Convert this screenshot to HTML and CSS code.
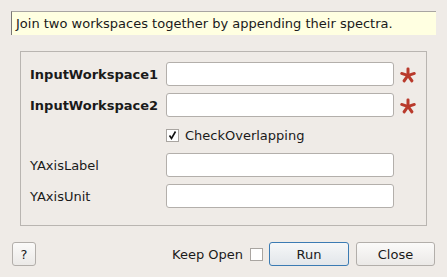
FILE: index.html
```html
<!DOCTYPE html>
<html lang="en">
<head>
    <meta charset="UTF-8">
    <title>AppendSpectra</title>
    <link rel="stylesheet" href="styles.css">
</head>
<body>
    <div class="dialog">
        <div class="description">Join two workspaces together by appending their spectra.</div>

        <div class="props">
            <label class="prop-label required" for="ws1">InputWorkspace1</label>
            <input type="text" id="ws1" class="prop-input">
            <span class="star"><svg width="16" height="16" viewBox="0 0 16 16"><g fill="#b93a2c"><rect x="6.5" y="0.5" width="3" height="8" rx="1.2"/><rect x="6.5" y="0.5" width="3" height="8" rx="1.2" transform="rotate(72 8 8.5)"/><rect x="6.5" y="0.5" width="3" height="8" rx="1.2" transform="rotate(144 8 8.5)"/><rect x="6.5" y="0.5" width="3" height="8" rx="1.2" transform="rotate(216 8 8.5)"/><rect x="6.5" y="0.5" width="3" height="8" rx="1.2" transform="rotate(288 8 8.5)"/></g></svg></span>

            <label class="prop-label required" for="ws2">InputWorkspace2</label>
            <input type="text" id="ws2" class="prop-input">
            <span class="star"><svg width="16" height="16" viewBox="0 0 16 16"><g fill="#b93a2c"><rect x="6.5" y="0.5" width="3" height="8" rx="1.2"/><rect x="6.5" y="0.5" width="3" height="8" rx="1.2" transform="rotate(72 8 8.5)"/><rect x="6.5" y="0.5" width="3" height="8" rx="1.2" transform="rotate(144 8 8.5)"/><rect x="6.5" y="0.5" width="3" height="8" rx="1.2" transform="rotate(216 8 8.5)"/><rect x="6.5" y="0.5" width="3" height="8" rx="1.2" transform="rotate(288 8 8.5)"/></g></svg></span>

            <span></span>
            <label class="check-row">
                <span class="checkbox checked"><svg width="11" height="11" viewBox="0 0 11 11"><path d="M2.5 5.5 L4.5 8.5 L8.5 1.5" fill="none" stroke="#111" stroke-width="1.6"/></svg></span>
                CheckOverlapping
            </label>
            <span></span>

            <label class="prop-label" for="ylabel">YAxisLabel</label>
            <input type="text" id="ylabel" class="prop-input">
            <span></span>

            <label class="prop-label" for="yunit">YAxisUnit</label>
            <input type="text" id="yunit" class="prop-input">
            <span></span>
        </div>

        <div class="button-bar">
            <button class="btn help-btn">?</button>
            <div class="right-buttons">
                <span class="keep-open">Keep Open</span>
                <span class="checkbox"></span>
                <button class="btn run-btn">Run</button>
                <button class="btn close-btn">Close</button>
            </div>
        </div>
    </div>
</body>
</html>
```

FILE: styles.css
```css
:root {
    --window-bg: #efebe7;
    --frame-color: #b9b5b1;
    --input-border: #b3afab;
    --text-color: #1a1a1a;
}

* {
    box-sizing: border-box;
}

body {
    margin: 0;
    background-color: var(--window-bg);
    font-family: 'DejaVu Sans', 'Liberation Sans', sans-serif;
    font-size: 13px;
    color: var(--text-color);
}

.dialog {
    width: 447px;
    height: 277px;
    display: flex;
    flex-direction: column;
}

.description {
    margin: 11px 11px 0 11px;
    height: 24px;
    padding: 0 4px;
    line-height: 23px;
    background: #ffffe1;
    border-top: 1px solid #a8a5a2;
    border-left: 1px solid #7a7875;
    white-space: nowrap;
}

.props {
    margin: 16px 20px 0 20px;
    border: 1px solid var(--frame-color);
    padding: 10px 0 17px 9px;
    display: grid;
    grid-template-columns: 136px 228px 32px;
    grid-template-rows: 24px 24px 22px 24px 24px;
    row-gap: 7px;
    align-items: center;
}

.prop-label {
    white-space: nowrap;
}

.prop-label.required {
    font-weight: bold;
}

.prop-input {
    width: 228px;
    height: 24px;
    border: 1px solid var(--input-border);
    border-radius: 3px;
    background: white;
    outline: none;
}

.star {
    display: flex;
    align-items: center;
    padding-left: 6px;
    padding-top: 2px;
}

.check-row {
    display: flex;
    align-items: center;
    gap: 6px;
    margin-top: 1px;
}

.checkbox {
    width: 13px;
    height: 13px;
    border: 1px solid #a9a5a1;
    background: white;
    display: inline-flex;
    align-items: center;
    justify-content: center;
}

.button-bar {
    margin: 16px 12px 0 12px;
    display: flex;
    justify-content: space-between;
    align-items: center;
}

.right-buttons {
    display: flex;
    align-items: center;
}

.keep-open {
    margin-right: 7px;
}

.btn {
    font-family: inherit;
    font-size: 13px;
    color: var(--text-color);
    height: 24px;
    border: 1px solid #b2aeaa;
    border-radius: 3px;
    background: linear-gradient(#fbfaf9, #ebe9e7);
    padding: 0;
}

.help-btn {
    width: 24px;
}

.run-btn {
    width: 80px;
    margin-left: 6px;
    border-color: #3b7bb3;
    background: linear-gradient(#f6f7f8, #e2e6ea);
}

.close-btn {
    width: 79px;
    margin-left: 7px;
}
```
